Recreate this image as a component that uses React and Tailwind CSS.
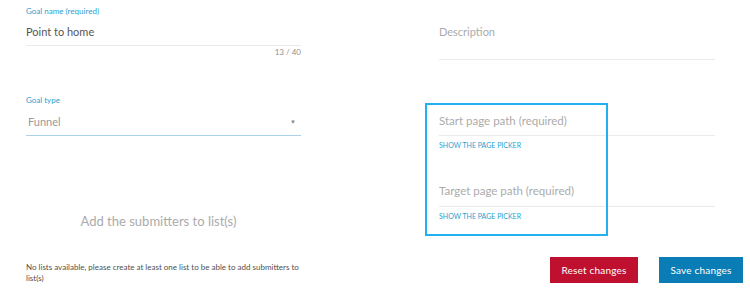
import React from 'react'

// input row with a bottom rule; text sits pb px above the rule
function Field({ text, muted, h, pb, size = "text-[11px]", line = "border-[#ebebeb]" }) {
  return (
    <div className={`flex items-end border-b ${line} ${h} ${pb}`}>
      <span className={`${size} leading-[16px] ${muted ? "text-[#ababab]" : "text-[#555555]"}`}>{text}</span>
    </div>
  )
}

function PickerLink() {
  return (
    <button className="block mt-[5px] text-[7px] leading-[8px] text-[#2a9fd0] uppercase">
      Show the page picker
    </button>
  )
}

export default function App() {
  return (
    <div className="relative w-[750px] h-[295px] bg-white overflow-hidden font-['Lato','Noto_Sans',sans-serif]">
      <div className="flex pl-[26px]">
        {/* left column */}
        <div className="w-[275px] pt-[6px]">
          <label className="block text-[8px] leading-[10px] text-[#2a9fd0]">Goal name (required)</label>
          <Field text="Point to home" h="h-[30px]" pb="pb-[5px]" />
          <div className="mt-[1px] text-right text-[8px] leading-[10px] text-[#8f8f8f]">13 / 40</div>

          <label className="block mt-[38px] text-[8px] leading-[10px] text-[#2a9fd0]">Goal type</label>
          <div className="flex items-end justify-between h-[31px] pb-[5px] border-b border-[#a9d2ea]">
            <span className="text-[11px] leading-[16px] text-[#9a9a9a] pl-[2px]">Funnel</span>
            <span className="text-[6px] leading-[16px] text-[#8a8a8a] pr-[5px]">▼</span>
          </div>

          <div className="mt-[75px] text-center text-[13px] leading-[20px] text-[#ababab] pr-[10px]">
            Add the submitters to list(s)
          </div>

          <p className="mt-[31px] w-[285px] text-[8px] leading-[11px] text-[#505050]">
            No lists available, please create at least one list to be able to add submitters to list(s)
          </p>
        </div>

        {/* right column */}
        <div className="ml-[138px] w-[276px]">
          <Field text="Description" muted h="h-[60px]" pb="pb-[19px]" />
          <Field text="Start page path (required)" muted h="h-[76px]" pb="pb-[6px]" size="text-[11.5px]" />
          <PickerLink />
          <Field text="Target page path (required)" muted h="h-[58px]" pb="pb-[7px]" size="text-[11.5px]" />
          <PickerLink />
        </div>
      </div>

      {/* focus highlight over the page path fields */}
      <div className="absolute left-[425px] top-[103px] w-[183px] h-[133px] border-2 border-[#22b1ef] pointer-events-none" />

      <div className="absolute right-[7px] top-[257px] flex gap-[21px]">
        <button className="w-[88px] h-[26px] bg-[#c0102f] text-white text-[10px] tracking-[0.02em]">Reset changes</button>
        <button className="w-[84px] h-[26px] bg-[#0b7db6] text-white text-[10px] tracking-[0.02em]">Save changes</button>
      </div>
    </div>
  )
}
